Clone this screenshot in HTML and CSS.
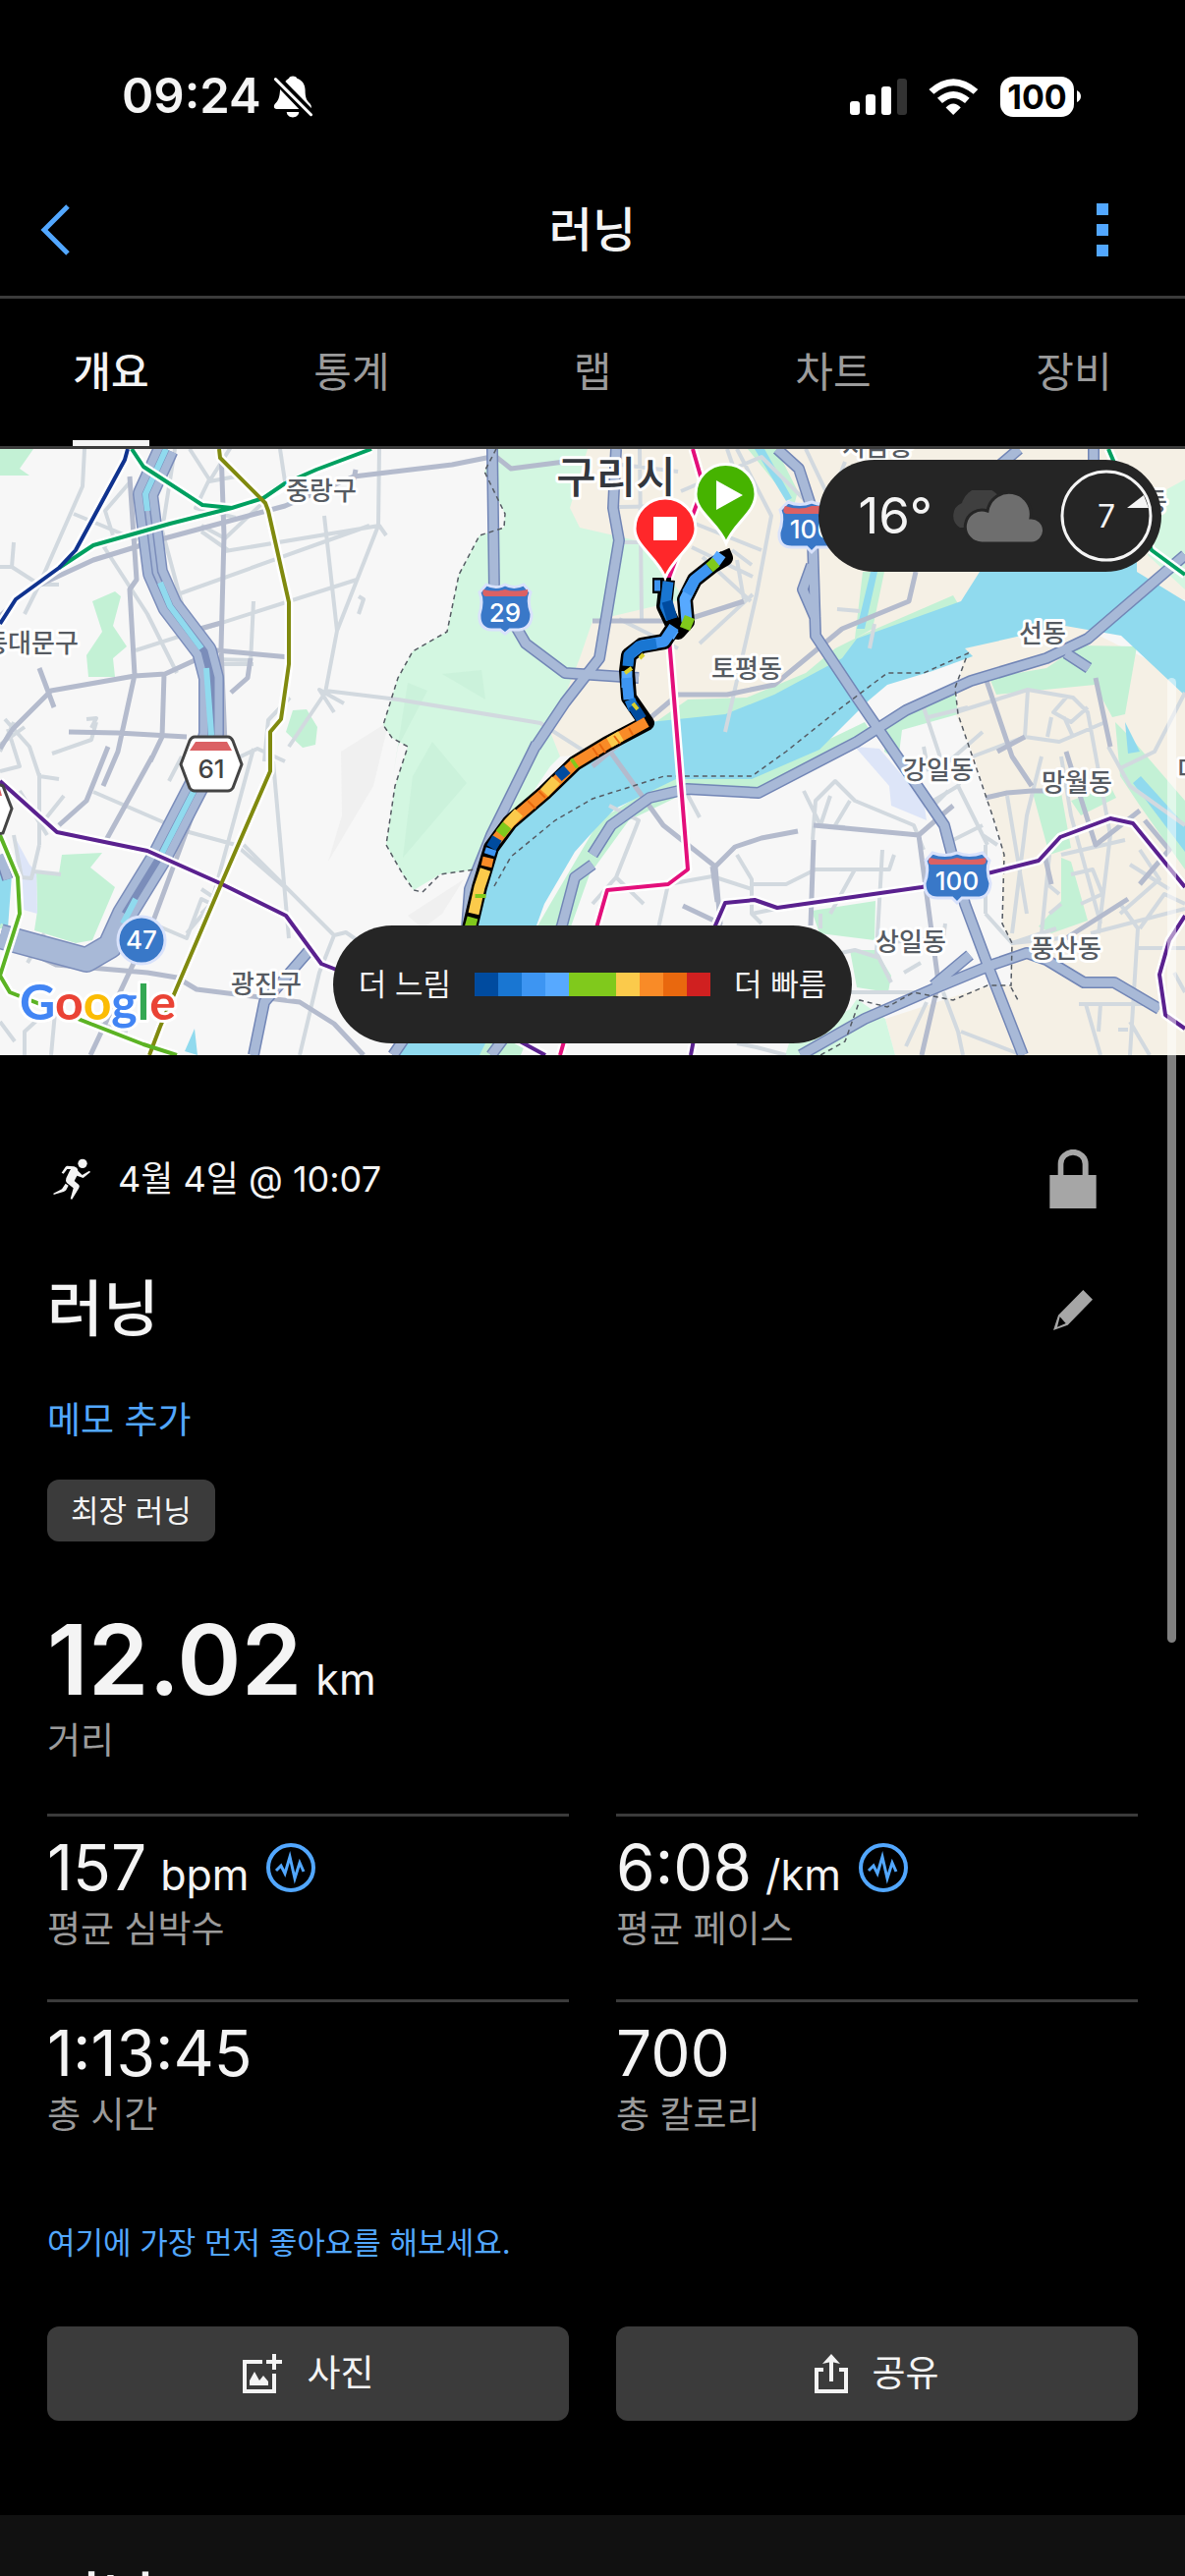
FILE: index.html
```html
<!DOCTYPE html>
<html lang="ko">
<head>
<meta charset="utf-8">
<meta name="viewport" content="width=device-width, initial-scale=1">
<title>러닝</title>
<link rel="stylesheet" href="styles.css">
</head>
<body>
<div class="app">
  <div class="status">
    <div class="status-group">
      <span class="clock">09:24</span>
      <svg class="bell" viewBox="504 50 120 130" aria-hidden="true">
        <path fill="#fff" d="M541 68C545 62 549 60 552 58C554 49 574 49 577 58C592 63 602 76 602 94C602 118 606 126 617 136Q622 142 621 150ZM525 92L583 153H515C505 153 504 144 509 137C520 126 523 118 525 92ZM545 162H583C581 184 547 184 545 162Z"/>
        <path stroke="#fff" stroke-width="9" stroke-linecap="round" d="M511 61L620 170"/>
      </svg>
    </div>
    <div class="status-group status-right">
      <svg class="signal" viewBox="0 0 58 37" aria-hidden="true">
        <g fill="#fff"><rect y="23" width="10" height="14" rx="3"/><rect x="16" y="16" width="10" height="21" rx="3"/><rect x="32" y="8" width="10" height="29" rx="3"/></g>
        <rect x="48" width="10" height="37" rx="3" fill="#333"/>
      </svg>
      <svg class="wifi" viewBox="286 56 152 112" aria-hidden="true">
        <path fill="#fff" d="M286 89Q361 24 437 89L423 104Q361 52 301 104ZM312 116Q361 74 411 116L397 132Q361 101 327 132ZM338 145Q361 121 384 145L361 168Z"/>
      </svg>
      <div class="battery"><span class="battery-level">100</span><svg class="battery-tip" viewBox="0 0 4 12" aria-hidden="true"><path fill="#fff" d="M0 0Q4 2 4 6T0 12Z"/></svg></div>
    </div>
  </div>

  <header class="topbar">
    <button class="icon-button back" aria-label="뒤로"><svg class="chevron" viewBox="0 0 30 52"><path d="M28 2L4 26L28 50" fill="none" stroke="#52a7ff" stroke-width="5"/></svg></button>
    <h1 class="topbar-title">러닝</h1>
    <button class="icon-button" aria-label="더보기"><svg class="dots" viewBox="0 0 12 54"><path fill="#52a7ff" d="M0 0H12V12H0ZM0 21H12V33H0ZM0 42H12V54H0Z"/></svg></button>
  </header>

  <nav class="tabs">
    <a class="tab tab-active" href="#overview">개요</a>
    <a class="tab" href="#stats">통계</a>
    <a class="tab" href="#laps">랩</a>
    <a class="tab" href="#charts">차트</a>
    <a class="tab" href="#gear">장비</a>
  </nav>

  <main class="content" id="overview">
    <section class="map" aria-label="지도">
      <svg class="map-canvas" viewBox="0 457 1206 617" preserveAspectRatio="xMidYMid slice">
        <rect y="457" width="1206" height="617" fill="#f7f7f7"/>
        <!-- land areas -->
        <g fill="#f0f0f0"><path d="M390 738L347 765L348 830L334 877L380 800L404 700ZM472 895L415 932L430 945L450 930Z"/></g>
        <path fill="#d3f7e1" d="M505 457L493 480L514 523L513 537L488 545L467 585L455 643L420 663L405 690L390 738L399 751L415 760L402 800L393 860L410 890L421 906L448 890L490 884L560 780L700 640V457Z"/>
        <path fill="#c8efd9" opacity=".7" d="M415 695L435 703L405 760L400 790ZM440 755L475 797L410 873L420 790ZM450 686L490 682L494 712Z"/>
        <path fill="#f5f0e5" d="M598 457L580 517L590 537L603 540L660 553L696 610L603 632L590 670L560 745L570 770L700 760L900 670L1206 610V457ZM982 660L1084 630L1206 690V1074H911L901 1037L1000 1005L1029 1003V960L1020 940V860L990 767L972 725Z"/>
        <path fill="#c3f1d5" d="M603 775L660 740L700 712L760 710L820 685L850 660L880 645L970 606L990 640L780 740L650 760ZM761 457H790L812 500L808 515ZM878 582H900L888 640L870 650ZM0 457H34L20 477L30 484H0ZM94 612L117 602L123 607L115 637L129 658L115 670L117 689H90L88 667L104 643ZM298 723L312 722L323 740L321 758L308 761L291 745ZM63 870L104 868L92 883L117 903L94 957L77 960L35 947L38 927L37 887L60 889ZM1099 657L1157 658L1145 727L1132 730L1114 697L1014 707L1007 690L1065 680ZM903 730L972 703L975 727L918 743L914 775L900 765ZM1135 735L1150 750L1206 815V885L1160 820L1140 790ZM1051 807H1080L1090 863L1068 870ZM1080 873L1090 877L1107 937L1070 950L1057 943L1080 917ZM826 927L891 917L890 957L834 950ZM865 967L891 967L907 993L904 1010L872 1005ZM1090 815L1130 800L1136 812L1100 830ZM480 1074L520 990L560 920L610 835L690 785L770 788L880 735L890 750L772 812L700 806L640 835L600 890L575 960L530 1074Z"/>
        <path fill="#d3f7e1" d="M799 1074L803 1062L865 1027L872 1017L901 1037L911 1074ZM1184 500L1206 488V600L1168 565Z"/>
        <path fill="#dde5f8" d="M30 880L37 887L38 930L20 925L14 850ZM870 760L895 762L940 815L943 835L907 820L905 800Z"/>
        <!-- river -->
        <path fill="#90daee" d="M997 582L978 612L872 650L857 670L788 707L738 727L661 735L600 770L554 807L505 860L490 910L470 960L440 1020L402 1074H488L500 1050L546 942L554 920L585 867L603 847L626 823L688 793H765L834 763L884 713L903 697L949 683L990 668L982 660L1084 637L1141 647L1206 708V612L1157 582V560H1010Z"/>
        <path fill="#90daee" d="M768 457H778L806 507L800 510ZM886 582H893L880 640H872ZM1153 797L1161 790L1206 840V867ZM1145 735L1160 765L1148 767ZM188 1070L198 1047L201 1074ZM0 875L12 890L8 945L0 945Z"/>
        <path fill="none" stroke="#c3f1d5" stroke-width="5" d="M0 942L35 958L88 985L115 955"/>
        <!-- local streets -->
        <g fill="none" stroke="#d2d9df" stroke-width="4" stroke-linejoin="round">
          <path d="M86 457L84 495L40 595L25 625M0 577H12L40 595H60M12 577L14 552M75 523L140 550M132 491L107 520L115 545L106 557L150 625L180 685M193 457L213 488L199 517L240 527M285 457L290 490M178 457L165 540L188 625M235 455L213 490L240 485M280 500L229 548L205 535M229 561L386 535L393 545M178 606L376 535M138 662L363 590M205 541L232 560M330 525L343 642L331 705L294 760M386 457L385 535L343 642L332 700M365 607L370 610L365 625M331 703L405 712L550 736L603 770M258 612L255 675M215 676H258M215 671L255 672M295 710L273 733L269 775M350 716L325 702L340 725M230 777L262 762L290 775M93 741L98 731L88 732M53 767L93 753L98 735M5 732L30 760L40 790L60 793M0 758L25 740M40 787V860M14 735L0 765M0 785L20 780L8 742M20 805L48 850M45 835L65 810M95 806L185 845L240 860L292 905M172 795L185 770M258 762L215 920L190 950M278 775L294 955M248 860L340 952L352 949L368 960L395 1000M340 952L325 990L305 1074M205 905L220 915L205 930M155 940L190 955L205 915L215 920M57 1020L52 1074M35 887L62 890M14 850L22 893L32 894L40 860M28 980L45 950M58 1020L25 1050V1074M75 1035L130 1050M0 1040L15 1060"/>
          <path d="M750 457L785 525L770 605L738 745M740 457L755 500M693 500L775 465L830 520M700 530L775 560M704 557L766 587M715 567L764 612M651 457L653 630M630 516L690 515M608 470L690 480M630 552H690M630 630L690 660M712 655L766 605M750 570L757 610M745 560L765 575M852 620L875 622M890 635L885 660M860 470L845 510M820 457L850 520M620 820L650 835L627 893L655 920M627 893L603 920M603 948H830M670 945L680 900L725 892L765 905M695 800L712 832M750 870L765 895V930L825 918M765 900H800L830 885M765 930L775 940M827 855L830 815L850 795L870 815L930 840L940 865M818 805L835 840L860 842M845 810L835 840M850 795L830 815M865 815L850 840M827 885H905L910 870M870 885L845 930M898 865L892 970L907 1000M937 980L920 990M892 960L960 955L962 940M835 930V945M832 975L870 967L895 975M905 1010L860 1010M940 760L945 785M988 770L975 800L1000 850L1005 860M965 805L950 820M975 800L950 815M970 855L1000 840M940 720L960 780L1000 745M945 730L985 720M1000 850L1015 860M1003 930L1030 960L1080 955M1003 930L1003 860"/>
          <path d="M973 725L1046 702L1092 710L1107 725L1130 850L1118 950M1046 702L1043 750L990 770M1043 750L1078 755L1125 735M1085 710L1072 725L1090 735L1107 720M1070 730L1066 750M1083 730L1092 750M1206 705L1175 765L1140 782M1128 760L1150 800L1206 840M1060 770L1045 830L1030 950M1025 810L1045 930M1080 770L1090 830L1120 940M1080 870L1145 855M1160 865L1180 895L1140 930M1150 880L1190 905M1068 870L1060 950M1090 890L1112 885L1122 910L1100 920M1110 950L1206 925M1030 960L1075 945M1066 900L1078 910M1068 930L1080 920M1140 920L1158 945L1150 1074M1158 965H1206M1160 945L1185 910L1206 920M1098 1022H1180M1120 1022L1118 1050M1105 1022L1120 1074M943 1020L922 1065M960 1010L975 1050L980 1074M978 1050L1035 1072M1150 1040L1170 1074M1195 990L1206 1010M1138 1048H1148M900 1010H945M750 1062L770 1066L800 1074"/>
        </g>
        <!-- arterial roads -->
        <g fill="none" stroke="#b4bbcd" stroke-width="5" stroke-linejoin="round">
          <path d="M132 485L139 590L132 600L137 687L120 765L105 800M225 457L228 545L225 660L229 757M0 627L30 600L95 570L160 550L290 515L360 485L460 473L500 465M360 488L362 478M0 762L13 742L52 703L137 688L168 686L220 662L295 669M40 680L55 720M70 745L120 746L190 750M167 686L165 750L153 775M110 760L88 815L60 840M155 770L108 855M205 805L155 940L92 1074M0 955L57 982L150 990L180 995L200 1007L305 1020L340 1042L370 1074M255 670L252 690L235 705M200 641L225 634M505 465L520 477L590 468M603 632H695L757 612M603 780L690 707H740L788 697L857 640L925 612L932 582M621 765L675 840L728 882L748 862L775 853L812 846M725 882L730 918M728 882L733 940L695 922M828 840L935 850L958 830L970 820M828 855L825 942M935 850L955 1000L938 1074M1003 690L1030 770L1050 800M1003 812L1025 807L1050 805H1070M1085 765L1115 860L1160 825M1063 870L1070 900M1085 955L1148 915M1115 690L1130 760M1015 765L1043 750M1165 835L1190 865L1160 900"/>
        </g>
        <!-- expressways -->
        <g fill="none" stroke-linejoin="round">
          <path stroke="#7b8dba" stroke-width="26" d="M169 457L148 503L158 583L173 617L208 663L215 690V747L205 790L162 873L127 930L112 963L88 977L0 953"/>
          <path stroke="#a8b9d7" stroke-width="23" d="M169 457L148 503L158 583L173 617L208 663L215 690V747L205 790L162 873L127 930L112 963L88 977L0 953"/>
          <path stroke="#7b8dba" stroke-width="7" d="M169 457L148 503L158 583L173 617L208 663L215 690V747L205 790L162 873L127 930"/>
          <path stroke="#a8b9d7" stroke-width="4" d="M148 503L158 583L173 617"/>
          <path stroke="#90daee" stroke-width="6" d="M169 457L148 503L150 520M163 593L173 617L205 660M210 680L215 747L205 790L165 868M138 915L125 940"/>
          <path stroke="#7286b6" stroke-width="12" d="M501 457L503 600L535 655L575 685L650 690M545 760L575 715L610 670L630 550L624 517L627 457M546 757L500 850L478 905L475 945L430 1030L400 1074M791 457L813 477L826 517L830 647L872 710L911 767L961 840L982 920L1007 987L1041 1074M603 870L622 840L661 812L699 803L772 807L872 755L922 723L988 693L1065 670L1107 650L1206 565M603 880L585 893L572 942L540 1020L500 1074M815 1074L880 1037L949 1007L1007 983L1045 970L1065 977L1103 1000H1134L1180 1027M315 967L269 1020L258 1074M1037 457L1010 480M1113 457V480M826 575L817 600L830 630M950 1003L987 972M1085 665L1108 680M0 870L8 895"/>
          <path stroke="#a8b9d7" stroke-width="9" d="M501 457L503 600L535 655L575 685L650 690M545 760L575 715L610 670L630 550L624 517L627 457M546 757L500 850L478 905L475 945L430 1030L400 1074M791 457L813 477L826 517L830 647L872 710L911 767L961 840L982 920L1007 987L1041 1074M603 870L622 840L661 812L699 803L772 807L872 755L922 723L988 693L1065 670L1107 650L1206 565M603 880L585 893L572 942L540 1020L500 1074M815 1074L880 1037L949 1007L1007 983L1045 970L1065 977L1103 1000H1134L1180 1027M315 967L269 1020L258 1074M1037 457L1010 480M1113 457V480M826 575L817 600L830 630M950 1003L987 972M1085 665L1108 680M0 870L8 895"/>
        </g>
        <!-- district boundaries -->
        <path fill="none" stroke="#555b63" stroke-width="1.5" stroke-dasharray="5 4" d="M505 457L493 480L514 523L513 537L488 545L467 585L455 643L420 663L405 690L390 738L399 751L415 760L402 800L393 860L410 890L421 906L430 908L448 890L490 884M503 902L520 872L565 835L603 813L676 790H765L800 765L850 725L903 685H940L985 665L972 700L975 727L1010 830L1022 870L1020 940L1030 960L1029 1003H1005L970 1018L930 1010L903 1025L875 1018L860 1060L835 1074M1029 1005L1036 1018"/>
        <!-- rail lines with white casing -->
        <g fill="none" stroke="#fff" stroke-width="9" stroke-linejoin="round">
          <path d="M134 457L146 475L206 514L236 517L268 507L322 478L378 457M236 517L173 533L95 555L60 578M130 457L127 468L77 560L60 578L16 610L0 635M223 457L224 466L270 512L273 520L294 613V676L286 732L275 745V785L225 900L163 1045L152 1074M0 795L58 847L150 866L224 899L291 932L327 981L345 988L520 1055L555 1074M703 1074L728 942L738 919L768 916L791 924L938 903L1009 888L1057 876L1079 852L1130 833L1153 838L1206 903M1206 932L1190 957L1180 992L1186 1033L1206 1047M705 457L716 495L680 590L681 650L690 760L700 885L680 900L618 906L570 1074M0 850L18 893L20 930L0 993L10 1010L146 1063L180 1074M1128 457L1172 560L1206 585"/>
        </g>
        <g fill="none" stroke-width="4" stroke-linejoin="round">
          <path stroke="#00a060" d="M134 457L146 475L206 514L236 517L268 507L290 492L322 478L378 457M236 517L173 533L95 555L60 578M1128 457L1172 560L1206 585"/>
          <path stroke="#10338f" d="M130 457L127 468L77 560L60 578L16 610L0 635"/>
          <path stroke="#5a218f" d="M0 795L58 847L150 866L224 899L291 932L327 981L345 988L520 1055L555 1074M703 1074L728 942L738 919L768 916L791 924L938 903L1009 888L1057 876L1079 852L1130 833L1153 838L1206 903M1206 932L1190 957L1180 992L1186 1033L1206 1047"/>
          <path stroke="#808a0f" d="M223 457L224 466L270 512L273 520L294 613V676L286 732L275 745V785L225 900L163 1045L152 1074"/>
          <path stroke="#e30f7b" d="M705 457L716 495L680 590L681 650L690 760L700 885L680 900L618 906L570 1074"/>
          <path stroke="#5cb324" d="M0 850L18 893L20 930L0 993L10 1010L146 1063L180 1074"/>
        </g>
        <!-- route shields -->
        <g stroke="#d9e2fb" stroke-width="3">
          <path fill="#3978c8" d="M495 595Q505 600 514 595Q523 600 533 595L540 603Q536 612 541 625Q541 640 528 641H519L514 645L509 641H500Q487 640 488 625Q492 612 488 603Z"/>
          <path fill="#3978c8" d="M949 868Q962 873 974 868Q986 873 1000 868L1007 876Q1003 885 1008 899Q1007 914 994 914H979L974 919L969 914H954Q941 914 941 899Q946 885 942 876Z"/>
          <path fill="#3978c8" d="M802 511Q814 516 826 511Q838 516 852 511L860 519V540Q860 557 846 557H831L826 562L821 557H806Q792 557 793 542Q798 528 794 519Z"/>
          <circle cx="144" cy="957" r="24" fill="#3978c8"/>
        </g>
        <path fill="#db6164" d="M492 600Q505 603 514 600Q523 603 537 600Q538 606 534 607H494Q490 606 492 600ZM946 873Q962 877 974 873Q986 877 1003 873Q1005 880 999 880H949Q943 880 946 873ZM799 515Q814 520 826 515H850V523H801Q795 522 799 515Z"/>
        <path fill="#fff" stroke="#444" stroke-width="3" d="M198 750H232Q235 750 237 754L246 778L237 802Q235 805 232 805H198Q195 805 193 802L184 778L193 754Q195 750 198 750ZM-10 795L3 800L12 823L3 848L-10 850Z"/>
        <path fill="#db6164" d="M199 755H231L236 764H193ZM0 803L2 810H0Z"/>
        <g class="shield-text"><text x="514" y="633">29</text><text x="974" y="906">100</text><text x="826" y="548">100</text><text x="144" y="966">47</text><text x="215" y="792" class="shield-dark">61</text></g>
        <!-- place names -->
        <g class="place">
          <text x="327" y="509">중랑구</text><text x="32" y="664">동대문구</text><text x="893" y="464">지금동</text><text x="760" y="690">토평동</text><text x="1061" y="654">선동</text><text x="955" y="793">강일동</text><text x="1096" y="806">망월동</text><text x="927" y="968">상일동</text><text x="1085" y="975">풍산동</text><text x="271" y="1011">광진구</text><text x="1234" y="793">미사동</text><text x="1176" y="520">동</text>
          <text class="place-city" x="627" y="502">구리시</text>
        </g>
        <!-- recorded track, coloured by pace -->
        <g fill="none" stroke-linejoin="round">
          <path stroke="#000" stroke-width="16" d="M735 561L738 568L726 575L707 590L697 610L699 633L690 643L686 638L676 617L679 590M664 596H683M686 638L676 653L653 657L640 667L638 683L640 710L658 736L618 757L585 777L554 807L519 837L500 863L488 903L478 945"/>
          <g stroke-width="11">
            <path stroke="#57a9ff" d="M734 564L726 575M707 590L697 610L699 633M638 683V700M686 640L681 648"/>
            <path stroke="#3d95f2" d="M722 578L707 590L699 604M686 638L676 653L653 657L640 667M638 690L640 712M666 596H672"/>
            <path stroke="#1976d2" d="M680 592L677 617L683 630M668 655L650 658L640 667L639 678M641 712L645 722"/>
            <path stroke="#004b9f" d="M679 612L684 630M644 718L653 732"/>
            <path stroke="#80c91c" d="M729 572L722 578M702 628L697 640"/>
            <path stroke="#f98b27" d="M658 735L618 757L585 777L554 807L519 837L505 855M497 873L495 882"/>
            <path stroke="#fbca4b" d="M632 749L620 756M566 794L554 807M528 827L516 840M494 885L488 903L482 930"/>
            <path stroke="#004b9f" d="M577 783L568 791M506 853L500 863"/>
            <path stroke="#80c91c" d="M586 776L583 778M516 840L509 849M489 910V914M481 934L478 945"/>
            <path stroke="#3d95f2" d="M500 864L498 870"/>
          </g>
          <path stroke="#e9680e" stroke-width="2" d="M610 757L616 766M603 761L609 770M625 749L631 757M640 741L644 748M548 805L555 812M537 815L545 823"/>
          <path stroke="#d9cf2c" stroke-width="4" d="M636 685L643 680M651 670L655 666M644 716L649 722"/>
        </g>
        <!-- start and finish pins -->
        <g stroke="#fff" stroke-width="3">
          <path fill="#46b300" d="M739 553C731 532 708 522 708 503A30.500 30.500 0 0 1 769 503C769 522 747 532 739 553Z"/>
          <path fill="#ff272a" d="M677 588C669 567 646 556 646 538A30.500 30.500 0 0 1 708 538C708 556 685 567 677 588Z"/>
        </g>
        <path fill="#fff" d="M729 489L756 504L729 519ZM665 526H689V550H665Z"/>
        <text class="google" x="20" y="1038"><tspan fill="#4285f4">G</tspan><tspan fill="#ea4335">o</tspan><tspan fill="#fbbc04">o</tspan><tspan fill="#4285f4">g</tspan><tspan fill="#34a853">l</tspan><tspan fill="#ea4335">e</tspan></text>
      </svg>
      <div class="weather">
        <span class="temp">16°</span>
        <svg class="cloud" viewBox="967 499 94 53" aria-hidden="true">
          <path fill="#3f3f3f" d="M977 537A14 14 0 0 1 979 512A21 21 0 0 1 1018 508V537Z"/>
          <path fill="#6e6e6e" stroke="#252525" stroke-width="3" d="M1000 553A17 17 0 1 1 1005 520A22 22 0 0 1 1049 527A13 13 0 0 1 1050 553Z"/>
        </svg>
        <svg class="wind" viewBox="0 0 94 94" role="img" aria-label="바람 7">
          <circle cx="47" cy="47" r="45" fill="none" stroke="#f4f4f4" stroke-width="3"/>
          <path fill="#f4f4f4" d="M68 39L85 26L90 39Z"/>
          <text class="wind-speed" x="47" y="59">7</text>
        </svg>
      </div>
      <div class="legend">
        <span>더 느림</span>
        <div class="scale"><i class="pace-1"></i><i class="pace-2"></i><i class="pace-3"></i><i class="pace-4"></i><i class="pace-5"></i><i class="pace-5"></i><i class="pace-6"></i><i class="pace-7"></i><i class="pace-8"></i><i class="pace-9"></i></div>
        <span>더 빠름</span>
      </div>
    </section>

    <section class="details">
      <div class="row">
        <div class="date">
          <svg class="runner" viewBox="24 48 144 144" aria-hidden="true"><circle cx="132" cy="73" r="14" fill="#f4f4f4"/><path fill="#f4f4f4" d="M84 80L106 82Q117 85 118 95L131 108L153 95L156 99L134 117L115 110L107 126L121 138Q124 142 121 148L100 182L95 181L104 148L84 132Q79 127 82 118L92 97L96 90L85 90L74 104L68 101L80 83ZM80 134L89 140L82 154Q79 158 74 159L44 168L43 164L69 151Z"/></svg>
          <span>4월 4일 @ 10:07</span>
        </div>
        <button class="icon-button" aria-label="공개 설정"><svg class="lock" viewBox="84 60 144 180"><path fill="#a6a6a6" d="M85 138H110V104A46 44 0 0 1 203 104V138H227V240H85ZM127 138H185V104A29 27 0 0 0 127 104Z"/></svg></button>
      </div>
      <div class="row">
        <h2 class="name">러닝</h2>
        <button class="icon-button" aria-label="이름 편집"><svg class="pencil" viewBox="96 489 120 123"><path fill="#a6a6a6" fill-rule="evenodd" d="M187 489L216 518L140 596L96 612L111 566ZM116 571L108 602L134 591Z"/></svg></button>
      </div>
      <a class="link memo" href="#memo">메모 추가</a>
      <span class="chip">최장 러닝</span>
      <div class="distance">
        <p class="value value-large">12.02 <small class="unit">km</small></p>
        <p class="label">거리</p>
      </div>
      <div class="metrics">
        <div class="metric"><p class="value">157 <small class="unit">bpm</small><svg class="pulse" viewBox="0 0 50 50" aria-hidden="true"><circle cx="25" cy="25" r="23" fill="none" stroke="#52a7ff" stroke-width="4"/><path fill="none" stroke="#52a7ff" stroke-width="3" d="M10 28L15 23L19 31L24 14L29 36L34 20L38 29"/></svg></p><p class="label">평균 심박수</p></div>
        <div class="metric"><p class="value">6:08 <small class="unit">/km</small><svg class="pulse" viewBox="0 0 50 50" aria-hidden="true"><circle cx="25" cy="25" r="23" fill="none" stroke="#52a7ff" stroke-width="4"/><path fill="none" stroke="#52a7ff" stroke-width="3" d="M10 28L15 23L19 31L24 14L29 36L34 20L38 29"/></svg></p><p class="label">평균 페이스</p></div>
        <div class="metric"><p class="value">1:13:45</p><p class="label">총 시간</p></div>
        <div class="metric"><p class="value">700</p><p class="label">총 칼로리</p></div>
      </div>
      <a class="link like" href="#like">여기에 가장 먼저 좋아요를 해보세요.</a>
      <div class="actions">
        <button class="action"><svg class="photo" viewBox="0 0 42 40" aria-hidden="true"><path fill="none" stroke="#f4f4f4" stroke-width="4" d="M21 8H3V38H33V20M33 0V16M25 8H41"/><path fill="#f4f4f4" d="M8 32V27L13 18L18 27L22 22L27 28V32Z"/></svg>사진</button>
        <button class="action"><svg class="share" viewBox="0 0 34 40" aria-hidden="true"><path fill="none" stroke="#f4f4f4" stroke-width="4" d="M9 16H2V38H32V16H25M17 28V6"/><path fill="#f4f4f4" d="M17 0L26 10L17 8L8 10Z"/></svg>공유</button>
      </div>
    </section>
  </main>
  <section class="next"><h2 class="next-title">러닝</h2></section>
  <div class="scrollbar"></div>
</div>
</body>
</html>
```
FILE: styles.css
```css
* { box-sizing: border-box; }
body {
  margin: 0;
  background: #000;
  color: #f4f4f4;
  font-family: Inter, "Noto Sans CJK KR", sans-serif;
  font-size: 37px;
  line-height: 48px;
}
h1, h2, p { margin: 0; }
svg { display: block; flex: none; }
button {
  padding: 0;
  border: 0;
  background: none;
  color: inherit;
  font: inherit;
}
a { text-decoration: none; }

.app {
  position: relative;
  display: flex;
  flex-direction: column;
  height: 100vh;
  overflow: hidden;
}
.app > * { flex: none; }

/* status bar */
.status {
  display: flex;
  justify-content: space-between;
  padding: 68px 106px 38px 124px;
}
.status-group { display: flex; align-items: center; gap: 12px; height: 60px; }
.status-right { gap: 22px; }
.clock { font-size: 49px; font-weight: 600; }
.bell { width: 40px; height: 43px; }
.signal { width: 58px; height: 37px; }
.wifi { width: 51px; height: 37px; }
.battery { display: flex; align-items: center; gap: 3px; }
.battery-level {
  width: 75px;
  height: 41px;
  border-radius: 13px;
  background: #fff;
  color: #000;
  font-size: 34px;
  font-weight: 700;
  line-height: 41px;
  text-align: center;
}
.battery-tip { width: 4px; height: 12px; }

/* title bar and tabs */
.topbar {
  display: flex;
  align-items: center;
  justify-content: space-between;
  height: 138px;
  padding: 0 36px;
  border-bottom: 3px solid #3b3b3b;
}
.topbar-title { font-size: 48px; font-weight: 500; line-height: 60px; }
.icon-button {
  display: flex;
  align-items: center;
  justify-content: center;
  width: 96px;
  height: 96px;
}
.back { justify-content: flex-start; padding-left: 5px; }
.chevron { width: 30px; height: 52px; }
.dots { width: 12px; height: 54px; }
.tabs {
  display: flex;
  justify-content: space-between;
  padding: 0 74px;
  border-bottom: 3px solid #3b3b3b;
}
.tab {
  min-width: 78px;
  border: solid transparent;
  border-width: 6px 0;
  color: #9b9b9b;
  font-size: 42px;
  line-height: 138px;
  text-align: center;
}
.tab-active { border-bottom-color: #f4f4f4; color: #f4f4f4; font-weight: 500; }

/* map */
.map { position: relative; }
.map-canvas { width: 100%; aspect-ratio: 1206 / 617; }
.place, .shield-text, .wind-speed { text-anchor: middle; }
.place {
  fill: #565b62;
  stroke: #fff;
  stroke-width: 6px;
  stroke-linejoin: round;
  paint-order: stroke;
  font-size: 26px;
  font-weight: 500;
}
.place-city { fill: #33373d; font-size: 44px; }
.shield-text { fill: #fff; font-size: 26px; font-weight: 500; }
.shield-dark { fill: #444; }
.google {
  stroke: #fff;
  stroke-width: 6px;
  stroke-linejoin: round;
  paint-order: stroke;
  font-family: Lato, sans-serif;
  font-size: 50px;
  font-weight: 700;
}
.weather, .legend {
  position: absolute;
  display: flex;
  align-items: center;
  border-radius: 60px;
  background: #252525;
}
.weather {
  top: 11px;
  right: 24px;
  gap: 18px;
  height: 114px;
  padding: 0 9px 0 40px;
}
.temp { font-size: 51px; }
.cloud { width: 94px; height: 53px; }
.wind { width: 94px; height: 94px; }
.wind-speed { fill: #f4f4f4; font-size: 32px; }
.legend {
  right: 0;
  bottom: 12px;
  left: 0;
  gap: 24px;
  width: fit-content;
  height: 120px;
  margin: 0 auto;
  padding: 0 26px;
  font-size: 31px;
}
.scale { display: flex; }
.scale i { width: 24px; height: 24px; }
.pace-1 { background: #004b9f; }
.pace-2 { background: #1976d2; }
.pace-3 { background: #3d95f2; }
.pace-4 { background: #57a9ff; }
.pace-5 { background: #80c91c; }
.pace-6 { background: #fbca4b; }
.pace-7 { background: #f98b27; }
.pace-8 { background: #e9680e; }
.pace-9 { background: #d02020; }

/* activity details */
.details {
  display: flex;
  flex-direction: column;
  align-items: flex-start;
  padding: 78px 48px 96px;
}
.row {
  display: flex;
  align-items: center;
  justify-content: space-between;
  width: 100%;
  height: 96px;
  margin-bottom: 37px;
  padding-right: 18px;
}
.date { display: flex; align-items: center; gap: 24px; font-size: 36px; }
.runner { width: 48px; height: 48px; }
.lock { width: 48px; height: 60px; }
.pencil { width: 40px; height: 41px; }
.name { font-size: 62px; font-weight: 500; line-height: 72px; }
.link { color: #52a7ff; }
.memo { margin: 4px 0 36px; }
.chip {
  padding: 0 24px;
  border-radius: 12px;
  background: #3b3b3b;
  font-size: 31px;
  line-height: 63px;
}
.distance { margin: 64px 0 50px; }
.value { display: flex; align-items: baseline; font-size: 64px; line-height: 72px; }
.value-large { font-size: 99px; font-weight: 600; line-height: 112px; }
.unit { margin-left: 14px; font-size: 43px; font-weight: 400; line-height: 48px; }
.pulse { align-self: center; width: 50px; height: 50px; margin-left: 18px; }
.label { margin-top: 3px; color: #9b9b9b; }
.metrics {
  display: grid;
  grid-template-columns: 1fr 1fr;
  column-gap: 48px;
  width: 100%;
}
.metric { padding: 16px 0 47px; border-top: 3px solid #3b3b3b; }
.like { margin: 35px 0 61px; font-size: 31px; }
.actions { display: grid; grid-template-columns: 1fr 1fr; gap: 48px; width: 100%; }
.action {
  display: flex;
  align-items: center;
  justify-content: center;
  gap: 24px;
  height: 96px;
  border-radius: 12px;
  background: #3b3b3b;
}
.photo { width: 42px; height: 40px; }
.share { width: 34px; height: 40px; }

.next { padding: 50px 48px; background: #111; }
.next-title { font-size: 60px; font-weight: 500; line-height: 72px; }

.scrollbar {
  position: absolute;
  top: 690px;
  right: 9px;
  width: 9px;
  height: 982px;
  border-radius: 5px;
  background: rgba(255, 255, 255, .5);
}
```
